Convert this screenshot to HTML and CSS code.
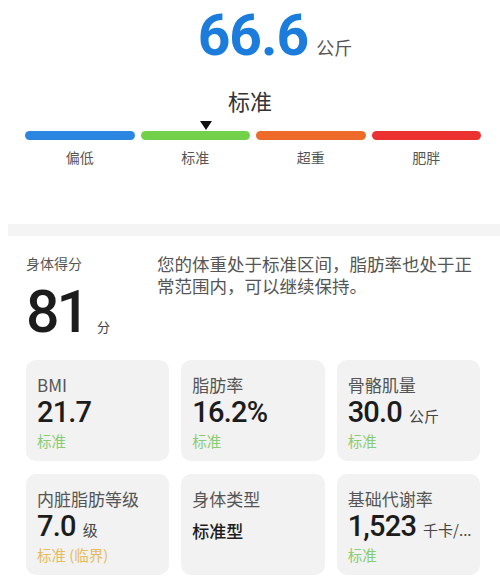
FILE: index.html
```html
<!DOCTYPE html>
<html lang="zh-CN">
<head>
  <meta charset="UTF-8" />
  <meta name="viewport" content="width=device-width, initial-scale=1.0"/>
  <title>体重报告</title>
  <link rel="stylesheet" href="styles.css">
</head>
<body>
  <div class="weight">
    <span class="weight-num">66.6</span>
    <span class="weight-unit">公斤</span>
  </div>

  <div class="level">标准</div>

  <div class="scale">
    <div class="marker" style="left: 40%"></div>
    <div class="scale-item">
      <div class="bar bar-low"></div>
      <div class="bar-label">偏低</div>
    </div>
    <div class="scale-item">
      <div class="bar bar-normal"></div>
      <div class="bar-label">标准</div>
    </div>
    <div class="scale-item">
      <div class="bar bar-over"></div>
      <div class="bar-label">超重</div>
    </div>
    <div class="scale-item">
      <div class="bar bar-fat"></div>
      <div class="bar-label">肥胖</div>
    </div>
  </div>

  <div class="divider"></div>

  <!-- Score -->
  <div class="score">
    <div class="score-left">
      <div class="score-title">身体得分</div>
      <div class="score-value"><span class="score-num">81</span><span class="score-unit">分</span></div>
    </div>
    <p class="score-text">您的体重处于标准区间，脂肪率也处于正常范围内，可以继续保持。</p>
  </div>

  <!-- Cards -->
  <div class="cards">
    <div class="card">
      <div class="card-label">BMI</div>
      <div class="card-value"><span class="num">21.7</span></div>
      <div class="card-status ok">标准</div>
    </div>
    <div class="card">
      <div class="card-label">脂肪率</div>
      <div class="card-value"><span class="num">16.2%</span></div>
      <div class="card-status ok">标准</div>
    </div>
    <div class="card">
      <div class="card-label">骨骼肌量</div>
      <div class="card-value"><span class="num">30.0</span><span class="unit">公斤</span></div>
      <div class="card-status ok">标准</div>
    </div>
    <div class="card">
      <div class="card-label">内脏脂肪等级</div>
      <div class="card-value"><span class="num">7.0</span><span class="unit">级</span></div>
      <div class="card-status warn">标准 (临界)</div>
    </div>
    <div class="card">
      <div class="card-label">身体类型</div>
      <div class="card-value"><span class="type">标准型</span></div>
    </div>
    <div class="card">
      <div class="card-label">基础代谢率</div>
      <div class="card-value"><span class="num">1,523</span><span class="unit">千卡/...</span></div>
      <div class="card-status ok">标准</div>
    </div>
  </div>
</body>
</html>
```

FILE: styles.css
```css
body {
  margin: 0;
  background-color: #fff;
  color: #333;
  font-family: "Noto Sans CJK SC", "Noto Sans", sans-serif;
}

/* Weight header */
.weight {
  display: flex;
  justify-content: center;
  align-items: baseline;
  gap: 8px;
  padding-top: 7px;
  padding-left: 50px;
}
.weight-num {
  font-family: Roboto, sans-serif;
  font-weight: 700;
  font-size: 57px;
  line-height: 58px;
  letter-spacing: -1px;
  color: #1b7cdc;
}
.weight-unit {
  font-size: 18px;
  color: #555;
}

.level {
  margin-top: 21px;
  text-align: center;
  font-size: 22px;
  line-height: 28px;
  color: #333;
}

/* Scale */
.scale {
  position: relative;
  display: grid;
  grid-template-columns: repeat(4, 1fr);
  gap: 6px;
  padding: 17px 19px 0 25px;
}
.marker {
  position: absolute;
  top: 7px;
  width: 0;
  height: 0;
  border-left: 6px solid transparent;
  border-right: 6px solid transparent;
  border-top: 9px solid #111;
}
.bar {
  height: 9px;
  border-radius: 5px;
}
.bar-low { background-color: #2b86e2; }
.bar-normal { background-color: #72d04a; }
.bar-over { background-color: #ee6a2b; }
.bar-fat { background-color: #ec3131; }
.bar-label {
  margin-top: 7px;
  text-align: center;
  font-size: 14px;
  line-height: 20px;
  color: #555;
}

.divider {
  height: 12px;
  margin: 57px 0 0 8px;
  background-color: #f4f4f4;
}

/* Score */
.score {
  display: flex;
  padding: 17px 20px 0 26px;
}
.score-left {
  width: 131px;
  flex-shrink: 0;
}
.score-title {
  font-size: 14px;
  line-height: 20px;
  color: #555;
}
.score-value {
  margin-top: 7px;
  display: flex;
  align-items: baseline;
}
.score-num {
  font-family: Roboto, sans-serif;
  font-weight: 500;
  font-size: 59px;
  line-height: 64px;
  letter-spacing: -3px;
  color: #1c1c1c;
}
.score-unit {
  margin-left: 10px;
  font-size: 13px;
  color: #444;
}
.score-text {
  margin: 0;
  font-size: 17.5px;
  line-height: 22px;
  color: #555;
}

/* Cards */
.cards {
  display: grid;
  grid-template-columns: repeat(3, 1fr);
  gap: 13px 12px;
  padding: 16px 20px 0 26px;
}
.card {
  height: 101px;
  box-sizing: border-box;
  padding: 14px 11px 0 11px;
  border-radius: 10px;
  background-color: #f2f2f2;
  overflow: hidden;
}
.card-label {
  font-size: 17px;
  line-height: 22px;
  color: #555;
  white-space: nowrap;
}
.card-value {
  display: flex;
  align-items: baseline;
  height: 32px;
  white-space: nowrap;
}
.card-value .num {
  font-family: Roboto, sans-serif;
  font-weight: 500;
  font-size: 29px;
  line-height: 32px;
  letter-spacing: -0.8px;
  color: #1c1c1c;
}
.card-value .unit {
  margin-left: 7px;
  font-size: 15px;
  color: #444;
}
.card-value .type {
  font-size: 17px;
  font-weight: 500;
  line-height: 42px;
  color: #1c1c1c;
}
.card-status {
  margin-top: 4px;
  font-size: 14.5px;
  line-height: 18px;
}
.card-status.ok { color: #88cc74; }
.card-status.warn { color: #e5bb5c; }
```
